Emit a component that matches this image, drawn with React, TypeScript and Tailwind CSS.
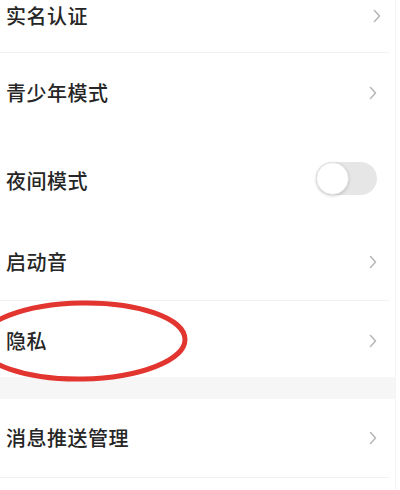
import React from "react";

const font = { fontFamily: '"Noto Sans CJK SC", "Noto Sans", sans-serif' };

function Chevron() {
  return (
    <svg width="8" height="14" viewBox="0 0 8 14" className="shrink-0">
      <path d="M1.5 1.5 L6.5 7 L1.5 12.5" fill="none" stroke="#b8b8b8" strokeWidth="1.6" strokeLinecap="round" strokeLinejoin="round" />
    </svg>
  );
}

function Row({ label, h, pt, right }: { label: string; h: string; pt?: string; right?: React.ReactNode }) {
  return (
    <div className={`flex items-center justify-between pl-[6px] pr-[18px] ${h} ${pt ?? ""}`}>
      <span className="text-[20px] leading-[24px] tracking-[0.5px] font-medium text-[#262626]">{label}</span>
      {right ?? <Chevron />}
    </div>
  );
}

export default function App() {
  return (
    <div className="relative w-[400px] h-[490px] overflow-hidden bg-white" style={font}>
      <div className="flex flex-col w-[396px] border-r border-[#f4f4f4] h-full">
        <div className="flex items-start justify-between pl-[6px] pr-[14px] h-[52px] pt-[4px]">
          <span className="text-[20px] leading-[24px] tracking-[0.5px] font-medium text-[#262626]">实名认证</span>
          <div className="pt-[5px]"><Chevron /></div>
        </div>
        <div className="h-px bg-[#f2f2f2] mr-[6px]" />
        <Row label="青少年模式" h="h-[80px] pr-[14px]" pt="pb-[1px]" />
        <div className="flex items-center justify-between pl-[6px] pr-[18px] h-[90px]">
          <span className="text-[20px] leading-[24px] tracking-[0.5px] font-medium text-[#262626] mt-[5px]">夜间模式</span>
          <div className="relative w-[61px] h-[33px] rounded-full bg-[#e6e6e6]">
            <div className="absolute left-0 top-0 w-[33px] h-[33px] rounded-full bg-white border border-[#e2e2e2] shadow-[0_1px_3px_rgba(0,0,0,0.18)]" />
          </div>
        </div>
        <Row label="启动音" h="h-[77px] pr-[14px]" />
        <div className="h-px bg-[#f2f2f2] mr-[6px]" />
        <Row label="隐私" h="h-[76px] pr-[14px]" pt="pt-[4px]" />
        <div className="h-[22px] bg-[#f6f6f6]" />
        <Row label="消息推送管理" h="h-[78px] pr-[14px]" />
        <div className="h-px bg-[#f2f2f2] mr-[6px]" />
        <div className="flex-1 bg-white" />
      </div>
      <svg className="absolute left-0 top-0 pointer-events-none" width="400" height="490" viewBox="0 0 400 490">
        <ellipse cx="82" cy="341" rx="103" ry="38" fill="none" stroke="#e23530" strokeWidth="5" transform="rotate(-1 82 341)" />
      </svg>
    </div>
  );
}
